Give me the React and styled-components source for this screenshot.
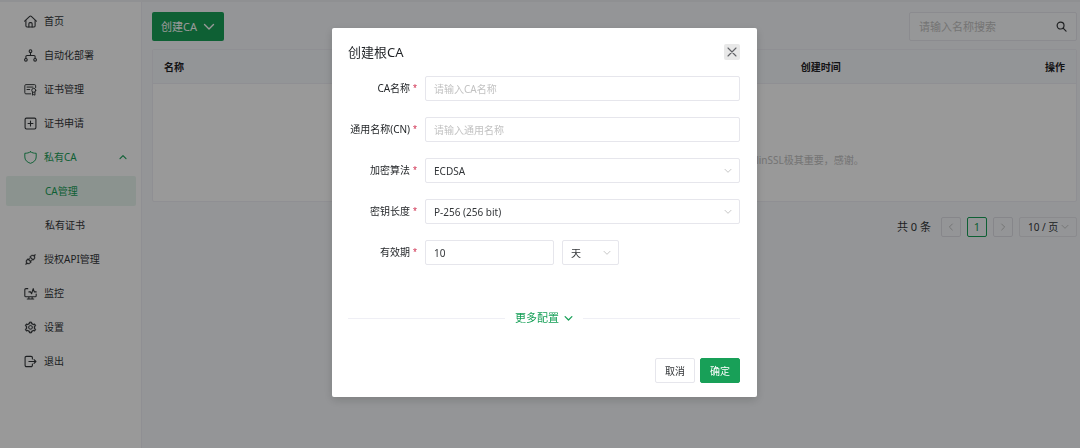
import React from "react";
import styled, { createGlobalStyle } from "styled-components";
import { AiOutlineApi, AiOutlineSetting } from "react-icons/ai";

//styles
const GlobalStyle = createGlobalStyle`
  * {
    box-sizing: border-box;
  }
  body {
    margin: 0;
    background: #f7f9fc;
  }
  body, button, input, select {
    font-family: "Noto Sans", "Noto Sans CJK SC", sans-serif;
    font-size: 10px;
    line-height: 16px;
    color: #333639;
  }
  button {
    cursor: pointer;
  }
`;

const Layout = styled.div`
  display: flex;
  min-height: 100vh;
`;

const Sidebar = styled.nav`
  flex: none;
  width: 142px;
  padding: 4px 5px 4px 6px;
  background: #fff;
  border-top: 2px solid #f0f2f5;
  border-right: 1px solid #efeff5;
`;

const MenuList = styled.ul`
  display: flex;
  flex-direction: column;
  gap: 4px;
  margin: 0;
  padding: 0;
  list-style: none;
`;

const MenuLink = styled.a`
  display: flex;
  align-items: center;
  gap: 7px;
  height: 30px;
  padding: 0 9px 0 ${(props) => (props.$sub ? "39px" : "18px")};
  border-radius: 2px;
  color: ${(props) => (props.$green ? "#18a058" : "#333639")};
  background: ${(props) => (props.$active ? "#e8f6ee" : "transparent")};
  text-decoration: none;

  span {
    flex: 1;
  }
`;

const Main = styled.main`
  flex: 1;
  display: flex;
  flex-direction: column;
  padding: 10px 3px 0 10px;
  border-top: 2px solid #eef0f3;
`;

const Toolbar = styled.div`
  display: flex;
  justify-content: space-between;
  margin-bottom: 8px;
`;

const CreateButton = styled.button`
  display: flex;
  align-items: center;
  gap: 6px;
  height: 29px;
  padding: 0 9px;
  border: 0;
  border-radius: 2px;
  background: #18a058;
  color: #fff;
  font-size: 11px;
`;

const SearchBox = styled.label`
  display: flex;
  align-items: center;
  width: 168px;
  height: 29px;
  padding: 0 9px;
  border: 1px solid #e8e8ee;
  border-radius: 2px;
  background: #fbfcfd;

  input {
    flex: 1;
    min-width: 0;
    padding: 0;
    border: 0;
    background: none;
    font-size: 11px;
  }
  input::placeholder {
    color: #c2c2c2;
  }
`;

const Table = styled.table`
  width: 100%;
  border: 1px solid #efeff5;
  border-radius: 2px;
  border-spacing: 0;
  background: #fff;
  table-layout: fixed;

  th {
    height: 34px;
    padding: 0 11px;
    border-bottom: 1px solid #efeff5;
    background: #f5f8fc;
    color: #1f2225;
    font-weight: 700;
    text-align: left;
  }
  th:first-child {
    width: 69%;
  }
  th:last-child {
    text-align: right;
  }
  td {
    height: 117px;
    padding: 34px 23% 0 0;
    color: #c2c2c2;
    text-align: right;
  }
`;

const Pagination = styled.div`
  display: flex;
  align-items: center;
  justify-content: flex-end;
  gap: 6px;
  margin-top: 15px;
  font-size: 11px;
`;

const Total = styled.span`
  margin-right: 4px;
`;

const PageButton = styled.button`
  display: flex;
  align-items: center;
  justify-content: center;
  width: 20px;
  height: 20px;
  padding: 0;
  border: 1px solid ${(props) => (props.$active ? "#18a058" : "#e0e0e6")};
  border-radius: 2px;
  background: transparent;
  color: ${(props) => (props.$active ? "#18a058" : "#c2c2c2")};
  font-size: 11px;
`;

const Overlay = styled.div`
  position: fixed;
  inset: 0;
  display: flex;
  align-items: flex-start;
  justify-content: center;
  padding: 28px 0 0 9px;
  background: rgba(0, 0, 0, 0.4);
`;

const Modal = styled.form`
  width: 425px;
  padding: 16px 17px 14px 16px;
  border-radius: 2px;
  background: #fff;
  box-shadow: 0 3px 10px rgba(0, 0, 0, 0.16);
`;

const ModalHeader = styled.header`
  display: flex;
  align-items: center;
  justify-content: space-between;
  margin-bottom: 16px;

  h2 {
    margin: 0;
    font-size: 13px;
    line-height: 16px;
    font-weight: 400;
    color: #1f2225;
  }
`;

const CloseButton = styled.button`
  display: flex;
  align-items: center;
  justify-content: center;
  width: 16px;
  height: 16px;
  padding: 0;
  border: 0;
  border-radius: 2px;
  background: #e8e8e8;
  color: #606266;
`;

const FormRow = styled.div`
  display: flex;
  align-items: center;
  gap: 8px;
  margin-bottom: 16px;
`;

const Label = styled.label`
  flex: none;
  width: 69px;
  color: #1f2225;
  text-align: right;
  white-space: nowrap;

  span {
    margin-left: 3px;
    font-family: "Liberation Sans", sans-serif;
    color: #d03050;
  }
`;

const TextInput = styled.input`
  flex: ${(props) => (props.$short ? "0 0 129px" : "1")};
  min-width: 0;
  height: 25px;
  padding: 0 8px;
  border: 1px solid #e6e6ec;
  border-radius: 2px;
  background: #fff;

  &::placeholder {
    color: #c2c2c2;
  }
`;

const SelectWrap = styled.div`
  display: grid;
  flex: ${(props) => (props.$short ? "0 0 57px" : props.$small ? "none" : "1")};
  width: ${(props) => (props.$small ? "58px" : "auto")};
  align-items: center;

  select,
  svg {
    grid-area: 1 / 1;
  }
  select {
    width: 100%;
    height: ${(props) => (props.$small ? "20px" : "25px")};
    padding: 0 8px;
    border: 1px solid #e6e6ec;
    border-radius: 2px;
    background: transparent;
    appearance: none;
  }
  svg {
    justify-self: end;
    margin-right: 8px;
    color: #c2c2c2;
    pointer-events: none;
  }
`;

const MoreRow = styled.div`
  display: flex;
  align-items: center;
  gap: 10px;
  margin: 45px 0 32px;

  &::before,
  &::after {
    content: "";
    flex: 1;
    height: 1px;
    background: #efeff5;
  }
`;

const MoreButton = styled.button`
  display: flex;
  align-items: center;
  gap: 5px;
  padding: 0;
  border: 0;
  background: none;
  color: #18a058;
  font-size: 11px;
`;

const ModalFooter = styled.footer`
  display: flex;
  justify-content: flex-end;
  gap: 5px;
`;

const FooterButton = styled.button`
  width: 40px;
  height: 25px;
  padding: 0;
  border: 1px solid ${(props) => (props.$primary ? "#18a058" : "#e6e6ec")};
  border-radius: 2px;
  background: ${(props) => (props.$primary ? "#18a058" : "#fff")};
  color: ${(props) => (props.$primary ? "#fff" : "#333639")};
`;

// icons
const LineIcon = ({ size = 13, stroke = 2, children }) => (
  <svg
    width={size}
    height={size}
    viewBox="0 0 24 24"
    fill="none"
    stroke="currentColor"
    strokeWidth={stroke}
    strokeLinecap="round"
    strokeLinejoin="round"
    aria-hidden="true"
  >
    {children}
  </svg>
);

const HomeIcon = () => (
  <LineIcon>
    <path d="M1.200 11.500L10.500 2.600a2.200 2.200 0 0 1 3 0L22.800 11.500" />
    <path d="M3.500 10v10a2 2 0 0 0 2 2h13a2 2 0 0 0 2-2V10" />
    <path d="M9 22v-6a2 2 0 0 1 2-2h2a2 2 0 0 1 2 2v6" />
  </LineIcon>
);

const DeployIcon = () => (
  <LineIcon>
    <circle cx="12" cy="4" r="2.5" />
    <circle cx="3.5" cy="20" r="2.5" />
    <circle cx="20.5" cy="20" r="2.5" />
    <path d="M12 6.500V12M3.500 17.500V14a2 2 0 0 1 2-2h13a2 2 0 0 1 2 2v3.500" />
  </LineIcon>
);

const CertIcon = () => (
  <LineIcon stroke={1.8}>
    <path d="M12.500 20H3.500a2 2 0 0 1-2-2V5a2 2 0 0 1 2-2h16a2 2 0 0 1 2 2v3.500M5.500 7.500h11M5.500 12h5" />
    <circle cx="18" cy="13.5" r="3.7" />
    <path d="M15.800 17v5.500l2.200-1.300 2.200 1.300V17" />
  </LineIcon>
);

const PlusIcon = () => (
  <LineIcon>
    <rect x="2" y="2" width="20" height="20" rx="2.5" />
    <path d="M12 7.500v9M7.500 12h9" />
  </LineIcon>
);

const ShieldIcon = () => (
  <LineIcon stroke={1.8}>
    <path d="M12 1.500C9 3.500 5.500 4.200 1.500 4.200V11c0 6 4 9.500 10.500 11.800C18.500 20.500 22.500 17 22.500 11V4.200C18.500 4.200 15 3.500 12 1.500z" />
  </LineIcon>
);

const MonitorIcon = () => (
  <LineIcon>
    <path d="M7 3H3.500a2 2 0 0 0-2 2v11a2 2 0 0 0 2 2h17a2 2 0 0 0 2-2v-3M9 18v4M15 18v4M6 22h12" />
    <path d="M9 9h3l2 3.500L17 3l2 6h3.500" />
  </LineIcon>
);

const LogoutIcon = () => (
  <LineIcon>
    <path d="M15.500 7.500V5a2.500 2.500 0 0 0-2.500-2.500H4.500A2.500 2.500 0 0 0 2 5v14a2.500 2.500 0 0 0 2.500 2.500H13a2.500 2.500 0 0 0 2.500-2.500v-2.500" />
    <path d="M9 12h13M18.500 8.500L22 12l-3.500 3.500" />
  </LineIcon>
);

const SearchIcon = () => (
  <LineIcon size={11} stroke={2.6}>
    <circle cx="10" cy="10" r="7.5" />
    <path d="M15.500 15.500L22 22" />
  </LineIcon>
);

const CloseIcon = () => (
  <LineIcon size={12} stroke={2.2}>
    <path d="M4 4l16 16M20 4L4 20" />
  </LineIcon>
);

const arrows = {
  up: "M3 17l9-9 9 9",
  down: "M3 7l9 9 9-9",
  left: "M16 3l-9 9 9 9",
  right: "M8 3l9 9-9 9",
};

const Arrow = ({ to, size = 8, stroke = 3 }) => (
  <LineIcon size={size} stroke={stroke}>
    <path d={arrows[to]} />
  </LineIcon>
);

const menu = [
  { text: "首页", icon: <HomeIcon /> },
  { text: "自动化部署", icon: <DeployIcon /> },
  { text: "证书管理", icon: <CertIcon /> },
  { text: "证书申请", icon: <PlusIcon /> },
  { text: "私有CA", icon: <ShieldIcon />, green: true, open: true },
  { text: "CA管理", sub: true, green: true, active: true },
  { text: "私有证书", sub: true },
  {
    text: "授权API管理",
    icon: <AiOutlineApi size={13} stroke="currentColor" strokeWidth={24} />,
  },
  { text: "监控", icon: <MonitorIcon /> },
  {
    text: "设置",
    icon: <AiOutlineSetting size={13} stroke="currentColor" strokeWidth={24} />,
  },
  { text: "退出", icon: <LogoutIcon /> },
];

const FieldLabel = ({ id, children }) => (
  <Label htmlFor={id}>
    {children}
    <span>*</span>
  </Label>
);

const Select = ({ options, $short, $small, ...rest }) => (
  <SelectWrap $short={$short} $small={$small}>
    <select {...rest}>
      {options.map((o) => (
        <option key={o}>{o}</option>
      ))}
    </select>
    <Arrow to="down" stroke={2.8} />
  </SelectWrap>
);

function CreateRootCA() {
  return (
    <Overlay>
      <Modal
        role="dialog"
        aria-labelledby="modal-title"
        onSubmit={(e) => e.preventDefault()}
      >
        <ModalHeader>
          <h2 id="modal-title">创建根CA</h2>
          <CloseButton type="button" aria-label="关闭">
            <CloseIcon />
          </CloseButton>
        </ModalHeader>
        <FormRow>
          <FieldLabel id="name">CA名称</FieldLabel>
          <TextInput id="name" placeholder="请输入CA名称" />
        </FormRow>
        <FormRow>
          <FieldLabel id="cn">通用名称(CN)</FieldLabel>
          <TextInput id="cn" placeholder="请输入通用名称" />
        </FormRow>
        <FormRow>
          <FieldLabel id="algorithm">加密算法</FieldLabel>
          <Select id="algorithm" options={["ECDSA"]} />
        </FormRow>
        <FormRow>
          <FieldLabel id="length">密钥长度</FieldLabel>
          <Select id="length" options={["P-256 (256 bit)"]} />
        </FormRow>
        <FormRow>
          <FieldLabel id="validity">有效期</FieldLabel>
          <TextInput id="validity" $short defaultValue="10" />
          <Select $short aria-label="有效期单位" options={["天"]} />
        </FormRow>
        <MoreRow>
          <MoreButton type="button">
            更多配置
            <Arrow to="down" size={9} stroke={3.4} />
          </MoreButton>
        </MoreRow>
        <ModalFooter>
          <FooterButton type="button">取消</FooterButton>
          <FooterButton type="submit" $primary>
            确定
          </FooterButton>
        </ModalFooter>
      </Modal>
    </Overlay>
  );
}

function App() {
  return (
    <>
      <GlobalStyle />
      <Layout>
        <Sidebar>
          <MenuList>
            {menu.map((item) => (
              <li key={item.text}>
                <MenuLink
                  href="#"
                  $sub={item.sub}
                  $green={item.green}
                  $active={item.active}
                >
                  {item.icon}
                  <span>{item.text}</span>
                  {item.open && <Arrow to="up" stroke={3.4} />}
                </MenuLink>
              </li>
            ))}
          </MenuList>
        </Sidebar>
        <Main>
          <Toolbar>
            <CreateButton type="button">
              创建CA
              <Arrow to="down" size={12} stroke={2.8} />
            </CreateButton>
            <SearchBox>
              <input aria-label="搜索" placeholder="请输入名称搜索" />
              <SearchIcon />
            </SearchBox>
          </Toolbar>
          <Table>
            <thead>
              <tr>
                <th>名称</th>
                <th>创建时间</th>
                <th>操作</th>
              </tr>
            </thead>
            <tbody>
              <tr>
                <td colSpan={3}>AllinSSL极其重要，感谢。</td>
              </tr>
            </tbody>
          </Table>
          <Pagination>
            <Total>共 0 条</Total>
            <PageButton type="button" aria-label="上一页">
              <Arrow to="left" />
            </PageButton>
            <PageButton type="button" $active>
              1
            </PageButton>
            <PageButton type="button" aria-label="下一页">
              <Arrow to="right" />
            </PageButton>
            <Select $small aria-label="每页条数" options={["10 / 页"]} />
          </Pagination>
        </Main>
      </Layout>
      <CreateRootCA />
    </>
  );
}

export default App;
